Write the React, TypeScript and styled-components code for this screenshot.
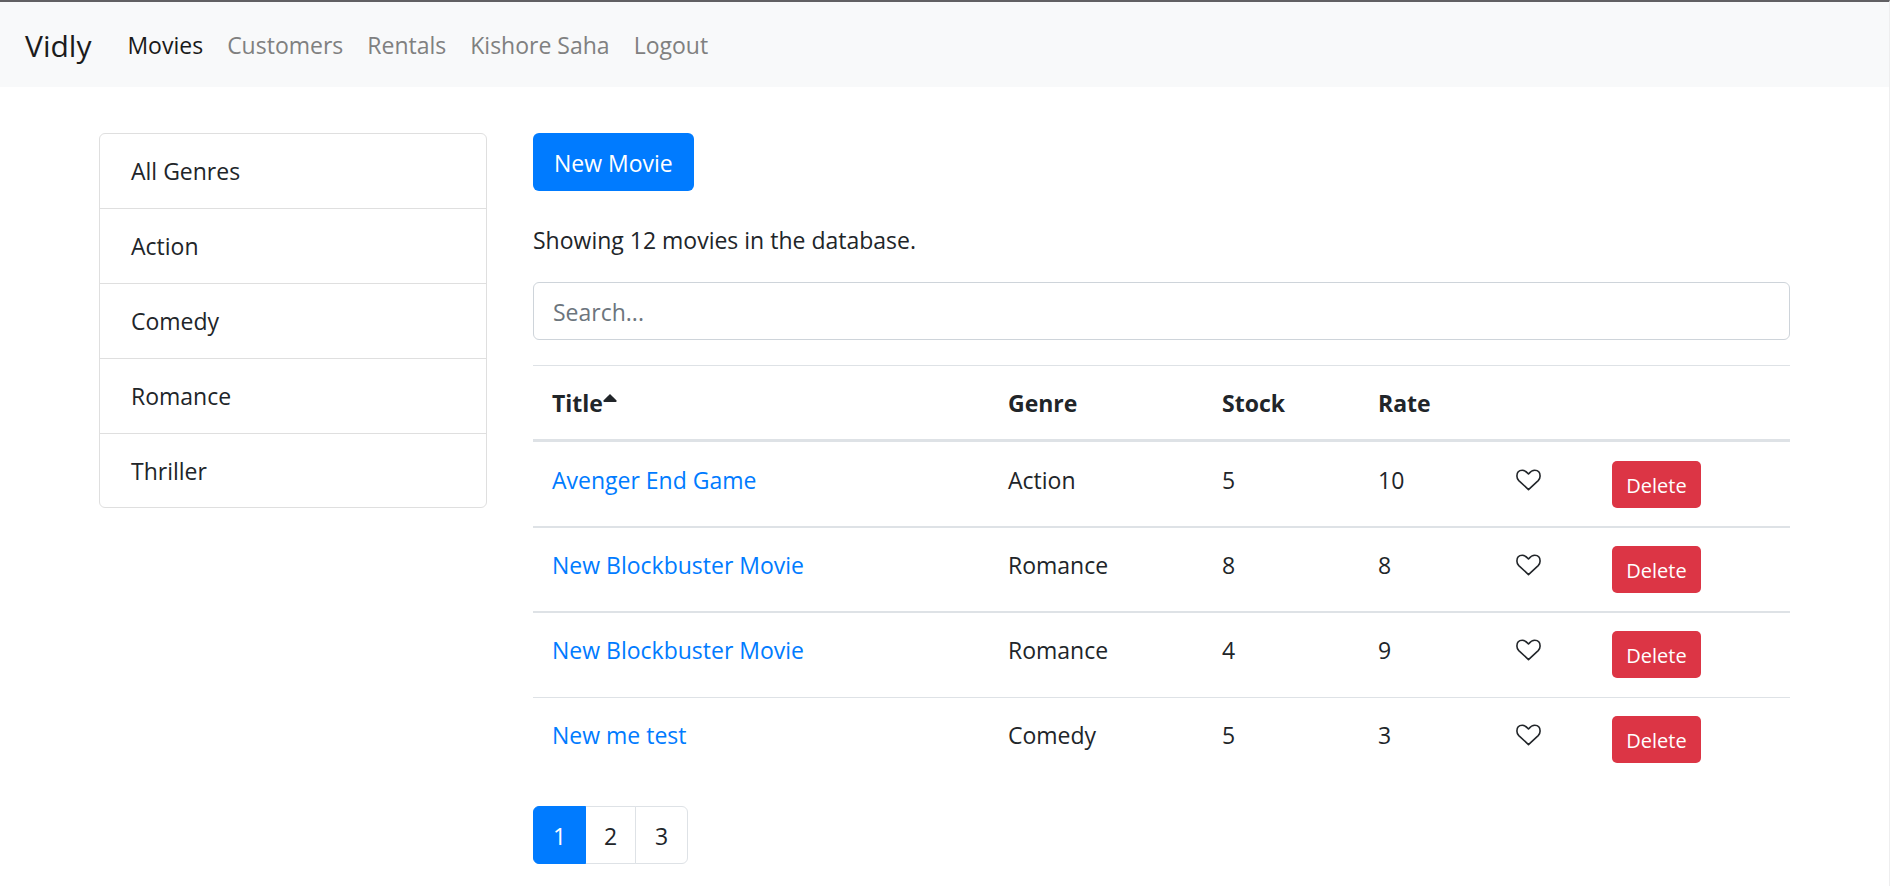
import React, { useState } from "react";
import styled, { createGlobalStyle } from "styled-components";

const GlobalStyle = createGlobalStyle`
  *, *::before, *::after { box-sizing: border-box; }
  body {
    margin: 0;
    background: #fff;
    color: #212529;
    font-family: "Segoe UI", "Open Sans", "Noto Sans", sans-serif;
    font-size: 23px;
    line-height: 37px;
  }
`;

const Page = styled.div`
  min-height: 100vh;
  border-top: 2px solid #616063;
  border-right: 1px solid #eeeeef;
`;

const Navbar = styled.nav`
  display: flex;
  align-items: center;
  flex-wrap: wrap;
  min-height: 85px;
  padding: 14px 25px 12px;
  background: #f8f9fa;
`;

const Brand = styled.a`
  margin-right: 36px;
  color: #1c1c1c;
  font-size: 30px;
  text-decoration: none;
`;

const NavLinks = styled.div`
  display: flex;
  flex-wrap: wrap;
  gap: 24px;
`;

const NavLink = styled.a<{ $active?: boolean }>`
  color: ${({ $active }) => ($active ? "#191919" : "#7f8080")};
  text-decoration: none;
`;

const Container = styled.main`
  display: flex;
  align-items: flex-start;
  gap: 46px;
  max-width: 1737px;
  margin: 0 auto;
  padding: 46px 23px;
`;

const GenreList = styled.ul`
  flex: 0 0 388px;
  margin: 0;
  padding: 0;
  list-style: none;
  border: 1px solid #dfdfdf;
  border-radius: 6px;
`;

const GenreItem = styled.li`
  padding: 19px 31px 18px;
  cursor: pointer;

  & + & { border-top: 1px solid #dfdfdf; }
  &:last-child { padding-bottom: 17px; }
`;

const Content = styled.section`
  flex: 1;
  min-width: 0;
`;

const PrimaryButton = styled.button`
  display: block;
  height: 58px;
  padding: 2px 21px 0;
  border: 0;
  border-radius: 6px;
  background: #007bff;
  color: #fff;
  font: inherit;
  cursor: pointer;
`;

const Summary = styled.p`
  margin: 31px 0 23px;
`;

const SearchInput = styled.input`
  display: block;
  width: 100%;
  height: 58px;
  margin-bottom: 25px;
  padding: 2px 19px 0;
  border: 1px solid #ced4da;
  border-radius: 6px;
  color: #495057;
  font: inherit;

  &::placeholder { color: #6c757d; opacity: 1; }
`;

const Table = styled.table`
  width: 100%;
  margin-bottom: 25px;
  table-layout: fixed;
  border-collapse: separate;
  border-spacing: 0;
`;

const Column = styled.col<{ $width?: number }>`
  width: ${({ $width }) => ($width ? `${$width}px` : "auto")};
`;

const HeadCell = styled.th`
  padding: 19px 19px 17px;
  border-top: 1px solid #dee2e6;
  border-bottom: 3px solid #dee2e6;
  text-align: left;
  font-weight: 700;
  cursor: pointer;
`;

const SortIcon = styled.svg`
  width: 14px;
  height: 8px;
  vertical-align: 10px;
`;

const Cell = styled.td`
  padding: 18px 19px;
  vertical-align: top;
  line-height: 39px;
  border-top: 2px solid #dee2e6;

  tr:first-child > & { padding-top: 19px; border-top: 0; }
  tr:nth-child(3) > & { padding-bottom: 19px; }
  tr:last-child > & { border-top-width: 1px; }
`;

const MovieLink = styled.a`
  color: #007bff;
  text-decoration: none;
`;

const LikeButton = styled.button`
  display: flex;
  align-items: center;
  height: 37px;
  padding: 0;
  border: 0;
  background: none;
  color: #212529;
  cursor: pointer;
`;

const DeleteButton = styled.button`
  display: block;
  width: 89px;
  height: 47px;
  padding: 2px 0 0;
  border: 0;
  border-radius: 5px;
  background: #dc3545;
  color: #fff;
  font: inherit;
  font-size: 20px;
  cursor: pointer;
`;

const Pagination = styled.nav`
  display: flex;
`;

const PageButton = styled.button<{ $active?: boolean }>`
  position: relative;
  z-index: ${({ $active }) => ($active ? 1 : 0)};
  width: 53px;
  height: 58px;
  padding: 2px 0 0;
  border: 1px solid ${({ $active }) => ($active ? "#007bff" : "#dee2e6")};
  background: ${({ $active }) => ($active ? "#007bff" : "#fff")};
  color: ${({ $active }) => ($active ? "#fff" : "#212529")};
  font: inherit;
  cursor: pointer;

  & + & { margin-left: -2px; }
  &:first-child { border-radius: 6px 0 0 6px; }
  &:last-child { border-radius: 0 6px 6px 0; }
`;

const navItems = ["Movies", "Customers", "Rentals", "Kishore Saha", "Logout"];
const genres = ["All Genres", "Action", "Comedy", "Romance", "Thriller"];
const movies = [
  { title: "Avenger End Game", genre: "Action", stock: 5, rate: 10 },
  { title: "New Blockbuster Movie", genre: "Romance", stock: 8, rate: 8 },
  { title: "New Blockbuster Movie", genre: "Romance", stock: 4, rate: 9 },
  { title: "New me test", genre: "Comedy", stock: 5, rate: 3 },
];

const Heart = () => (
  <svg width="25" height="22" viewBox="0 0 25 22" fill="none" stroke="currentColor" strokeWidth="1.6" strokeLinejoin="round" aria-hidden="true">
    <path d="M12.5 20.6 2.8 11.6C1.4 10.2.9 8.600.9 7c0-3.700 2.200-5.700 5.400-5.700 2.600 0 4.200 1.300 6.200 3.700 2-2.400 3.600-3.700 6.200-3.700 3.200 0 5.400 2 5.400 5.700 0 1.600-.5 3.200-1.900 4.600z" />
  </svg>
);

export default function App() {
  const [query, setQuery] = useState("");

  return (
    <>
      <GlobalStyle />
      <Page>
        <Navbar>
          <Brand href="#">Vidly</Brand>
          <NavLinks>
            {navItems.map((item, i) => (
              <NavLink key={item} href="#" $active={i === 0}>{item}</NavLink>
            ))}
          </NavLinks>
        </Navbar>
        <Container>
          <GenreList>
            {genres.map((genre) => <GenreItem key={genre}>{genre}</GenreItem>)}
          </GenreList>
          <Content>
            <PrimaryButton type="button">New Movie</PrimaryButton>
            <Summary>Showing 12 movies in the database.</Summary>
            <SearchInput
              aria-label="Search movies"
              placeholder="Search..."
              value={query}
              onChange={(e) => setQuery(e.target.value)}
            />
            <Table>
              <colgroup>
                <Column />
                <Column $width={214} />
                <Column $width={156} />
                <Column $width={138} />
                <Column $width={96} />
                <Column $width={197} />
              </colgroup>
              <thead>
                <tr>
                  <HeadCell>
                    Title
                    <SortIcon viewBox="0 0 14 8" aria-hidden="true">
                      <path d="M7 0 13.600 6.600Q14 8 12.800 8H1.200Q0 8 .4 6.600Z" fill="currentColor" />
                    </SortIcon>
                  </HeadCell>
                  <HeadCell>Genre</HeadCell>
                  <HeadCell>Stock</HeadCell>
                  <HeadCell>Rate</HeadCell>
                  <HeadCell />
                  <HeadCell />
                </tr>
              </thead>
              <tbody>
                {movies.map((movie, i) => (
                  <tr key={i}>
                    <Cell><MovieLink href="#">{movie.title}</MovieLink></Cell>
                    <Cell>{movie.genre}</Cell>
                    <Cell>{movie.stock}</Cell>
                    <Cell>{movie.rate}</Cell>
                    <Cell><LikeButton type="button" aria-label="Like"><Heart /></LikeButton></Cell>
                    <Cell><DeleteButton type="button">Delete</DeleteButton></Cell>
                  </tr>
                ))}
              </tbody>
            </Table>
            <Pagination aria-label="Pages">
              {[1, 2, 3].map((page) => (
                <PageButton key={page} type="button" $active={page === 1}>{page}</PageButton>
              ))}
            </Pagination>
          </Content>
        </Container>
      </Page>
    </>
  );
}
